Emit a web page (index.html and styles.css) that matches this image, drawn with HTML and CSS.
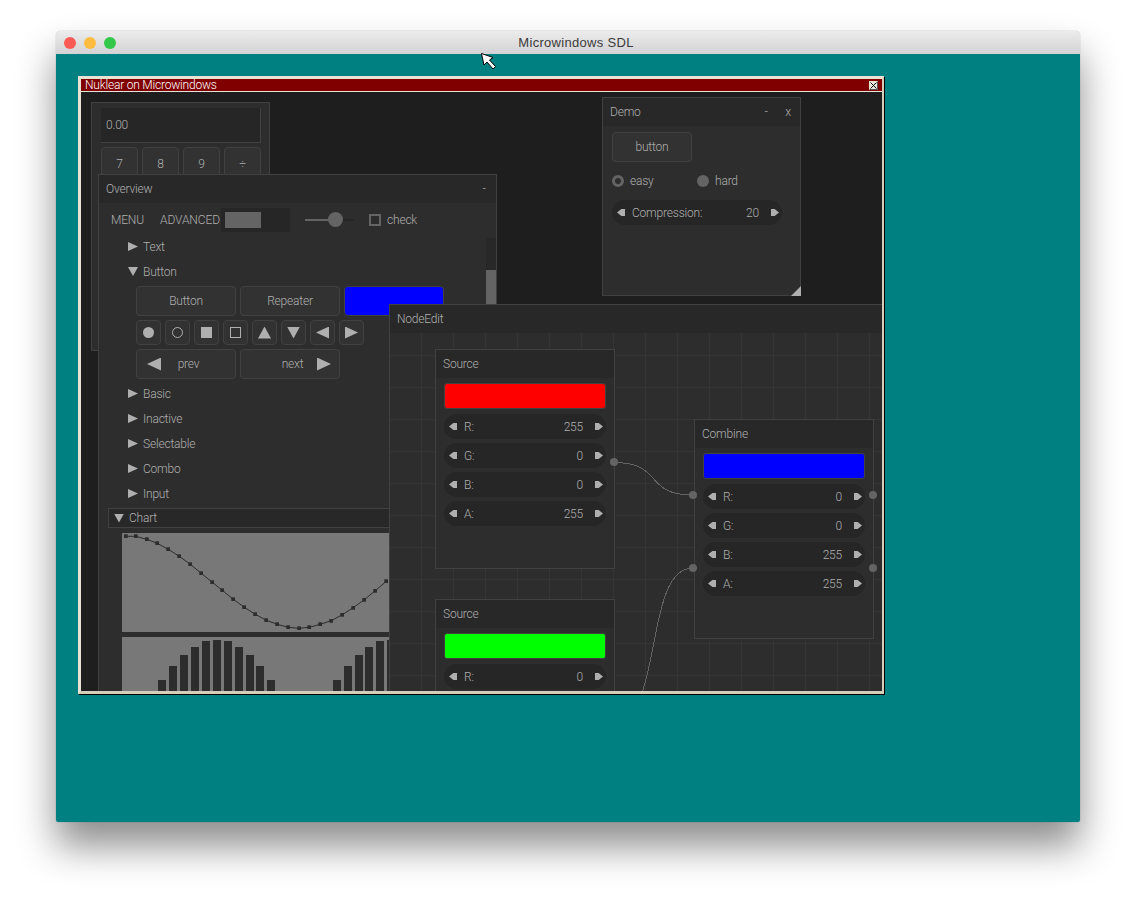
FILE: index.html
```html
<!DOCTYPE html>
<html lang="en">
<head>
  <meta charset="UTF-8">
  <title>Microwindows SDL</title>
  <link rel="stylesheet" href="styles.css">
</head>
<body>
  <div class="mac-window">
    <div class="mac-bar">
      <span class="light red"></span>
      <span class="light yellow"></span>
      <span class="light green"></span>
      <span class="mac-title">Microwindows SDL</span>
    </div>
    <div class="client">
      <div class="frame">
        <div class="frame-bar">
          <span>Nuklear on Microwindows</span>
          <svg class="frame-close" width="9" height="9" viewBox="0 0 9 9">
            <rect width="9" height="9" fill="#e8e4da"/>
            <path d="M1.5 1.5l6 6M7.5 1.5l-6 6" stroke="#111" fill="none"/>
            <path d="M.5 8.5h8v-8" stroke="#555" fill="none"/>
          </svg>
        </div>
        <div class="desk">

          <div class="win calc">
            <div class="calc-display">0.00</div>
            <div class="calc-keys">
              <div class="btn">7</div>
              <div class="btn">8</div>
              <div class="btn">9</div>
              <div class="btn">÷</div>
            </div>
          </div>

          <div class="win overview">
            <div class="win-head"><span>Overview</span><span class="win-ctl">-</span></div>
            <div class="overview-body">
              <div class="menubar">
                <span class="menu-item">MENU</span>
                <span class="menu-item adv">ADVANCED</span>
                <div class="progress"><div class="progress-fill"></div></div>
                <div class="slider"><div class="slider-on"></div><div class="slider-thumb"></div></div>
                <span class="checkbox"></span>
                <span>check</span>
              </div>
              <div class="tree"><i class="tri tri-r"></i>Text</div>
              <div class="tree"><i class="tri tri-d"></i>Button</div>
              <div class="btn-row tall">
                <div class="btn wide">Button</div>
                <div class="btn wide">Repeater</div>
                <div class="btn wide swatch blue"></div>
              </div>
              <div class="btn-row">
                <div class="btn sym"><i class="s-disc"></i></div>
                <div class="btn sym"><i class="s-ring"></i></div>
                <div class="btn sym"><i class="s-box"></i></div>
                <div class="btn sym"><i class="s-frame"></i></div>
                <div class="btn sym"><i class="s-tri tri-u"></i></div>
                <div class="btn sym"><i class="s-tri tri-d"></i></div>
                <div class="btn sym"><i class="s-tri tri-l"></i></div>
                <div class="btn sym"><i class="s-tri tri-r"></i></div>
              </div>
              <div class="btn-row tall">
                <div class="btn wide pager"><i class="big-tri tri-l"></i><span>prev</span><i></i></div>
                <div class="btn wide pager"><i></i><span>next</span><i class="big-tri tri-r"></i></div>
              </div>
              <div class="tree"><i class="tri tri-r"></i>Basic</div>
              <div class="tree"><i class="tri tri-r"></i>Inactive</div>
              <div class="tree"><i class="tri tri-r"></i>Selectable</div>
              <div class="tree"><i class="tri tri-r"></i>Combo</div>
              <div class="tree"><i class="tri tri-r"></i>Input</div>
              <div class="tree-tab"><i class="tri tri-d"></i>Chart</div>
              <div class="chart">
                <svg width="267" height="99" viewBox="0 0 267 99">
                  <defs>
                    <marker id="pt" markerUnits="userSpaceOnUse" markerWidth="4" markerHeight="4" refX="2" refY="2">
                      <rect width="4" height="4" fill="#2d2d2d"/>
                    </marker>
                  </defs>
                  <polyline class="chart-line" points="3.7,3.3 13.7,3.3 24.7,6.3 35.3,10.3 46.3,16.3 57.3,23.3 68.3,31.3 79.3,40.3 90.3,49.3 100.3,57.3 111.3,66.3 122.3,74.3 133.3,81.3 144.3,87.3 155.3,91.3 166.3,94.3 177.3,95.3 187.3,94.3 198.3,91.3 209.3,87.7 220.3,81.7 231.3,74.7 242.3,66.7 253.3,57.7 264.3,48.3"/>
                </svg>
              </div>
              <div class="chart bars">
                <svg width="267" height="54" viewBox="0 0 267 54" fill="#2d2d2d">
                  <rect x="36" y="43" width="8" height="11"/>
                  <rect x="47" y="29" width="8" height="25"/>
                  <rect x="58" y="18" width="8" height="36"/>
                  <rect x="69" y="10" width="8" height="44"/>
                  <rect x="80" y="4" width="8" height="50"/>
                  <rect x="91" y="3" width="8" height="51"/>
                  <rect x="102" y="4" width="8" height="50"/>
                  <rect x="113" y="10" width="8" height="44"/>
                  <rect x="124" y="18" width="8" height="36"/>
                  <rect x="134" y="29" width="8" height="25"/>
                  <rect x="145" y="43" width="8" height="11"/>
                  <rect x="211" y="43" width="8" height="11"/>
                  <rect x="222" y="29" width="8" height="25"/>
                  <rect x="233" y="18" width="8" height="36"/>
                  <rect x="243" y="10" width="8" height="44"/>
                  <rect x="254" y="4" width="8" height="50"/>
                  <rect x="265" y="3" width="8" height="51"/>
                </svg>
              </div>
            </div>
            <div class="scrollbar"><div class="scroll-thumb"></div></div>
          </div>

          <div class="win demo">
            <div class="win-head"><span>Demo</span><span class="win-ctl">-</span><span class="win-ctl close">x</span></div>
            <div class="demo-body">
              <div class="btn demo-btn">button</div>
              <div class="radios">
                <label class="radio"><i class="dot on"></i>easy</label>
                <label class="radio"><i class="dot"></i>hard</label>
              </div>
              <div class="prop">
                <i class="arr arr-l"></i><span class="prop-name">Compression:</span><span>20</span><i class="arr arr-r"></i>
              </div>
            </div>
            <i class="resize"></i>
          </div>

          <div class="win nodeedit">
            <div class="win-head"><span>NodeEdit</span></div>
            <div class="grid"></div>
            <svg class="wires" width="600" height="420" viewBox="0 0 600 420">
              <path d="M224 157.5C274 157.5 253 190 303 190"/>
              <path d="M224 416C274 416 253 263 303 263"/>
            </svg>

            <div class="win node n-src1">
              <div class="win-head"><span>Source</span></div>
              <div class="node-body">
                <div class="swatch color red"></div>
                <div class="prop"><i class="arr arr-l"></i><span class="prop-name">R:</span><span>255</span><i class="arr arr-r"></i></div>
                <div class="prop"><i class="arr arr-l"></i><span class="prop-name">G:</span><span>0</span><i class="arr arr-r"></i></div>
                <div class="prop"><i class="arr arr-l"></i><span class="prop-name">B:</span><span>0</span><i class="arr arr-r"></i></div>
                <div class="prop"><i class="arr arr-l"></i><span class="prop-name">A:</span><span>255</span><i class="arr arr-r"></i></div>
              </div>
            </div>

            <div class="win node n-src2">
              <div class="win-head"><span>Source</span></div>
              <div class="node-body">
                <div class="swatch color green"></div>
                <div class="prop"><i class="arr arr-l"></i><span class="prop-name">R:</span><span>0</span><i class="arr arr-r"></i></div>
              </div>
            </div>

            <div class="win node n-comb">
              <div class="win-head"><span>Combine</span></div>
              <div class="node-body">
                <div class="swatch color blue"></div>
                <div class="prop"><i class="arr arr-l"></i><span class="prop-name">R:</span><span>0</span><i class="arr arr-r"></i></div>
                <div class="prop"><i class="arr arr-l"></i><span class="prop-name">G:</span><span>0</span><i class="arr arr-r"></i></div>
                <div class="prop"><i class="arr arr-l"></i><span class="prop-name">B:</span><span>255</span><i class="arr arr-r"></i></div>
                <div class="prop"><i class="arr arr-l"></i><span class="prop-name">A:</span><span>255</span><i class="arr arr-r"></i></div>
              </div>
            </div>

            <i class="pin p1"></i>
            <i class="pin p2"></i>
            <i class="pin p3"></i>
            <i class="pin p4"></i>
            <i class="pin p5"></i>
          </div>

        </div>
      </div>
    </div>
  </div>

  <svg class="cursor" width="18" height="20" viewBox="0 0 18 20">
    <path d="M1.5 1.5L4 13l3-3 6 7 2.5-2.5-6-6.500 3.500-2.500z" fill="#fff" stroke="#000"/>
  </svg>
</body>
</html>
```

FILE: styles.css
```css
body {
  margin: 0;
  height: 902px;
  overflow: hidden;
  background: #fff;
  font-family: 'Roboto', 'Liberation Sans', sans-serif;
  font-weight: 300;
  font-size: 12px;
  letter-spacing: -0.2px;
  color: #afafaf;
}

i {
  display: block;
  font-style: normal;
}

/* mac window */
.mac-window {
  margin: 31px 0 0 56px;
  width: 1024px;
  height: 791px;
  border-radius: 5px 5px 2px 2px;
  box-shadow: 0 24px 38px rgba(0, 0, 0, 0.45), 0 0 1px rgba(0, 0, 0, 0.5);
}

.mac-bar {
  display: flex;
  align-items: center;
  gap: 8px;
  height: 23px;
  padding-left: 8px;
  box-sizing: border-box;
  border-radius: 5px 5px 0 0;
  background: linear-gradient(#ececec, #d4d2d4);
  position: relative;
}

.light {
  width: 12px;
  height: 12px;
  border-radius: 50%;
}
.light.red { background: #fc5a55; }
.light.yellow { background: #fdbc40; }
.light.green { background: #34c84a; }

.mac-title {
  flex: 1;
  text-align: center;
  margin-right: 52px;
  font-family: 'Liberation Sans', sans-serif;
  font-weight: 400;
  font-size: 13px;
  letter-spacing: 0.3px;
  color: #3a3a3a;
}

.client {
  height: 768px;
  padding: 22px 0 0 22px;
  box-sizing: border-box;
  background: #008080;
  border-radius: 0 0 2px 2px;
}

/* microwindows frame */
.frame {
  width: 806px;
  height: 618px;
  box-sizing: border-box;
  border-style: solid;
  border-width: 3px 2px 3px 3px;
  border-color: #e9e3d6 #d6ceba #d6ceba #e9e3d6;
  box-shadow: 1px 1px 0 #000;
}

.frame-bar {
  display: flex;
  align-items: center;
  justify-content: space-between;
  height: 13px;
  padding: 0 4px;
  box-sizing: border-box;
  background: #800000;
  border-bottom: 1px solid #e9e3d6;
  color: #fff;
  font-size: 12px;
}

.desk {
  position: relative;
  width: 801px;
  height: 599px;
  overflow: hidden;
  background: #1e1e1e;
}

/* nuklear windows */
.win {
  position: absolute;
  box-sizing: border-box;
  background: #2d2d2d;
  border: 1px solid #414141;
}

.win-head {
  display: flex;
  align-items: center;
  height: 28px;
  padding: 0 7px;
  background: #282828;
}

.win-ctl {
  margin-left: auto;
  width: 10px;
  text-align: center;
}
.win-ctl.close {
  margin-left: 12px;
}

.btn {
  display: flex;
  align-items: center;
  justify-content: center;
  box-sizing: border-box;
  background: #323232;
  border: 1px solid #414141;
  border-radius: 4px;
}

.swatch { border: 1px solid #414141; }
.blue { background: #0000ff; }
.red { background: #ff0000; }
.green { background: #00ff00; }

/* calculator */
.calc {
  left: 10px;
  top: 10px;
  width: 179px;
  height: 249px;
  padding: 5px 8px 0 9px;
}

.calc-display {
  display: flex;
  align-items: center;
  height: 35px;
  padding-left: 5px;
  background: #262626;
  border-right: 1px solid #414141;
  border-bottom: 1px solid #414141;
  box-sizing: border-box;
}

.calc-keys {
  display: grid;
  grid-template-columns: repeat(4, 37px);
  gap: 4px;
  margin-top: 4px;
}
.calc-keys .btn { height: 34px; }

/* overview */
.overview {
  left: 17px;
  top: 82px;
  width: 399px;
  height: 700px;
}

.overview-body {
  display: flex;
  flex-direction: column;
  gap: 4px;
  padding-top: 5px;
}

.menubar {
  display: flex;
  align-items: center;
  height: 24px;
  padding-left: 12px;
}

.menu-item { width: 49px; }
.menu-item.adv { width: 61px; letter-spacing: -0.1px; }

.progress {
  width: 69px;
  height: 24px;
  padding: 4px;
  box-sizing: border-box;
  background: #262626;
}
.progress-fill {
  width: 36px;
  height: 16px;
  background: #646464;
}

.slider {
  position: relative;
  width: 49px;
  height: 2px;
  margin: 0 15px;
  background: #262626;
}
.slider-on {
  width: 30px;
  height: 2px;
  background: #646464;
}
.slider-thumb {
  position: absolute;
  left: 23px;
  top: -7px;
  width: 15px;
  height: 15px;
  border-radius: 50%;
  background: #646464;
}

.checkbox {
  width: 12px;
  height: 12px;
  margin-right: 6px;
  box-sizing: border-box;
  border: 2px solid #646464;
}

.tree {
  display: flex;
  align-items: center;
  gap: 5px;
  height: 21px;
  padding-left: 29px;
}

.tri {
  width: 10px;
  height: 9px;
  background: #afafaf;
}
.tri-r { clip-path: polygon(0 0, 100% 50%, 0 100%); }
.tri-l { clip-path: polygon(100% 0, 0 50%, 100% 100%); }
.tri-d { clip-path: polygon(0 0, 100% 0, 50% 100%); }
.tri-u { clip-path: polygon(50% 0, 100% 100%, 0 100%); }

.btn-row {
  display: flex;
  gap: 4px;
  height: 25px;
  margin-left: 37px;
}
.btn-row.tall { height: 30px; }

.btn.wide { width: 100px; }

.btn.sym { width: 25px; }

.s-disc, .s-ring, .s-box, .s-frame {
  width: 11px;
  height: 11px;
  box-sizing: border-box;
}
.s-disc { background: #afafaf; border-radius: 50%; }
.s-ring { border: 1px solid #afafaf; border-radius: 50%; }
.s-box { background: #afafaf; }
.s-frame { border: 1px solid #afafaf; }
.s-tri {
  width: 13px;
  height: 12px;
  background: #afafaf;
}

.btn.pager {
  display: grid;
  grid-template-columns: 1fr auto 1fr;
  align-items: center;
  padding: 0 5px 0 10px;
}
.btn.pager span { padding: 0 5px; }
.btn.pager .tri-r { justify-self: end; margin-right: 3px; }
.big-tri {
  width: 14px;
  height: 13px;
  background: #afafaf;
}

.tree-tab {
  display: flex;
  align-items: center;
  gap: 5px;
  width: 340px;
  height: 20px;
  margin-left: 9px;
  padding-left: 5px;
  box-sizing: border-box;
  background: #282828;
  border: 1px solid #414141;
}

.chart {
  width: 340px;
  height: 99px;
  margin: 1px 0 0 23px;
  background: #787878;
}
.chart svg { display: block; overflow: hidden; }
.chart-line {
  fill: none;
  stroke: #2d2d2d;
  marker-start: url(#pt);
  marker-mid: url(#pt);
  marker-end: url(#pt);
}
.chart.bars { height: 54px; margin-top: 1px; }

.scrollbar {
  position: absolute;
  left: 387px;
  top: 63px;
  width: 10px;
  height: 460px;
  background: #282828;
}
.scroll-thumb {
  height: 130px;
  margin-top: 32px;
  background: #646464;
}

/* demo */
.demo {
  left: 521px;
  top: 5px;
  width: 199px;
  height: 199px;
}

.demo-body {
  padding: 6px 18px 0 9px;
}

.btn.demo-btn {
  width: 80px;
  height: 30px;
}

.radios {
  display: flex;
  align-items: center;
  height: 25px;
  margin-top: 6px;
}

.radio {
  display: flex;
  align-items: center;
  gap: 6px;
  width: 87px;
}

.dot {
  width: 12px;
  height: 12px;
  box-sizing: border-box;
  border-radius: 50%;
  background: #646464;
}
.dot.on {
  background: #2d2d2d;
  border: 3px solid #646464;
}

.resize {
  position: absolute;
  right: -1px;
  bottom: -1px;
  width: 10px;
  height: 10px;
  background: #afafaf;
  clip-path: polygon(100% 0, 100% 100%, 0 100%);
}

.prop {
  display: flex;
  align-items: center;
  height: 25px;
  padding: 0 3px 0 5px;
  box-sizing: border-box;
  border-radius: 12.5px;
  background: #262626;
}
.demo .prop { margin-top: 7px; }

.prop-name {
  flex: 1;
  margin-left: 7px;
}

.arr {
  width: 8px;
  height: 7px;
  background: #afafaf;
}
.arr-l {
  clip-path: polygon(0 50%, 55% 0, 100% 0, 100% 100%, 55% 100%);
}
.arr-r {
  margin-left: 12px;
  clip-path: polygon(0 0, 45% 0, 100% 50%, 45% 100%, 0 100%);
}

/* node editor */
.nodeedit {
  left: 308px;
  top: 212px;
  width: 600px;
  height: 420px;
}

.grid {
  height: 392px;
  background-image:
    linear-gradient(to right, #353535 1px, transparent 1px),
    linear-gradient(to bottom, #353535 1px, transparent 1px);
  background-size: 32px 32px;
  background-position: 31px 22px;
}

.wires {
  position: absolute;
  left: 0;
  top: 0;
  shape-rendering: crispEdges;
}
.wires path {
  fill: none;
  stroke: #646464;
}

.node { width: 180px; }
.n-src1 { left: 45px; top: 44px; height: 220px; }
.n-src2 { left: 45px; top: 294px; height: 220px; }
.n-comb { left: 304px; top: 114px; height: 220px; }

.node-body {
  display: flex;
  flex-direction: column;
  gap: 4px;
  padding: 5px 8px 0 8px;
}

.swatch.color {
  height: 24px;
  border-radius: 3px;
  margin-bottom: 1px;
}

.pin {
  position: absolute;
  width: 8px;
  height: 8px;
  border-radius: 50%;
  background: #646464;
}
.p1 { left: 220px; top: 153px; }
.p2 { left: 299px; top: 186px; }
.p3 { left: 299px; top: 259px; }
.p4 { left: 479px; top: 186px; }
.p5 { left: 479px; top: 259px; }

.cursor {
  position: absolute;
  left: 480px;
  top: 52px;
}
```
